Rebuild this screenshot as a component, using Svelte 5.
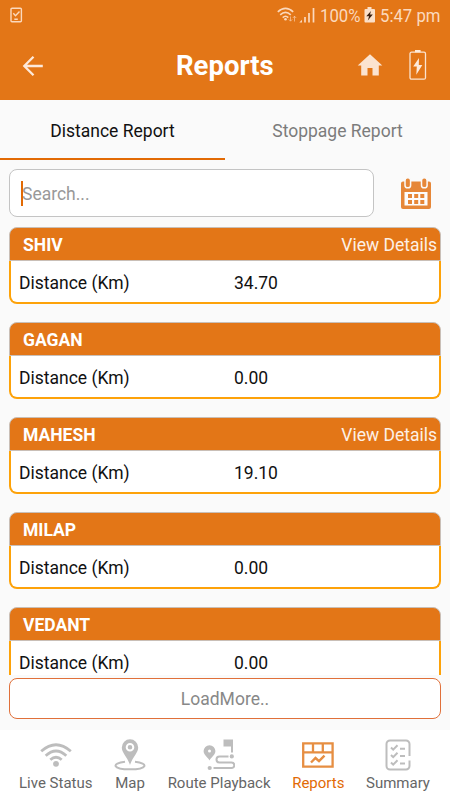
<script lang="ts">
    let tab = $state('distance');
    let search = $state('');

    const vehicles = [
        { name: 'SHIV', distance: '34.70', details: true },
        { name: 'GAGAN', distance: '0.00', details: false },
        { name: 'MAHESH', distance: '19.10', details: true },
        { name: 'MILAP', distance: '0.00', details: false },
        { name: 'VEDANT', distance: '0.00', details: false },
    ];

    let shown = $derived(vehicles.filter((v) => v.name.includes(search.toUpperCase())));
</script>

<div class="app">
    <header>
        <div class="status">
            <svg class="task" width="14" height="18" viewBox="0 0 14 18" fill="none" stroke="#fbd9bd" stroke-width="1.4">
                <rect x="1" y="1.2" width="10.4" height="13.6" rx="1"/>
                <path d="M3.3 6.3l2.2 2.4 4-4.2M4.3 12.3h3.5"/>
            </svg>
            <svg class="signal" width="40" height="18" viewBox="0 0 40 18" fill="none" stroke="#fbd9bd" stroke-width="1.6">
                <path d="M.8 4.8Q8.5-2.2 16.2 4.8M3.2 7.8Q8.5 2.8 13.8 7.8M5.7 10.6Q8.5 7.9 11.3 10.6"/>
                <circle cx="8.5" cy="12.2" r="1.3" fill="#fbd9bd" stroke="none"/>
                <path d="M13.5 9.5v4.5M11.8 12.4l1.7 1.8 1.7-1.8M17.5 14.5V9.2M15.8 11l1.7-1.8 1.7 1.8" stroke-width="1" opacity=".6"/>
                <path d="M22.3 15.5L25 12.8v2.700z" fill="#fbd9bd" stroke="none"/>
                <path d="M28 15.500V10M32 15.500V6M36.500 15.500V1" stroke-width="1.700"/>
            </svg>
            <span class="pct"><span>100%</span></span>
            <svg class="charge" width="12" height="17" viewBox="0 0 12 17">
                <path d="M3.5 0h4v2H10a1 1 0 0 1 1 1v11.500a1 1 0 0 1-1 1H1.500a1 1 0 0 1-1-1V3a1 1 0 0 1 1-1h2z" fill="#fbe0c9"/>
                <path d="M7 4L2.300 9.200h2.800l-1.300 4.300 5-5.900H6z" fill="#3a2010"/>
            </svg>
            <span class="time"><span>5:47 pm</span></span>
        </div>
        <div class="title">
            <svg class="back" width="22" height="22" viewBox="0 0 22 22" fill="none" stroke="#fde9da" stroke-width="2.3">
                <path d="M20.8 11H2.3M11.500 1.800L2.300 11l9.200 9.200"/>
            </svg>
            <h1>Reports</h1>
            <svg class="home" width="26" height="23" viewBox="0 0 26 23">
                <path d="M13 .2L25.300 11.500h-3.500v10h-6.300v-7.500h-5v7.500H4.200v-10H.7z" fill="#fbe3d0"/>
            </svg>
            <svg class="battery" width="18" height="31" viewBox="0 0 18 31">
                <rect x="1" y="2.2" width="15.500" height="27" rx="1.500" fill="none" stroke="#fbe3d0" stroke-width="1.300"/>
                <path d="M6 0h5.600v2.300H6zM10 8L4.200 16.600h3.600l-.5 8.200 6-9.800H9.800z" fill="#fdeadb"/>
            </svg>
        </div>
    </header>

    <div class="tabs">
        <button class:active={tab === 'distance'} onclick={() => (tab = 'distance')}>Distance Report</button>
        <button class:active={tab === 'stoppage'} onclick={() => (tab = 'stoppage')}>Stoppage Report</button>
    </div>

    <div class="search">
        <div class="field">
            <input type="text" placeholder="Search..." bind:value={search}/>
        </div>
        <svg width="32" height="33" viewBox="0 0 32 33">
            <path d="M3 4.500h26a2 2 0 0 1 2 2V30a2 2 0 0 1-2 2H3a2 2 0 0 1-2-2V6.500a2 2 0 0 1 2-2z" fill="#e68738"/>
            <path d="M4.500 15h23V28.500h-23z" fill="#fcfcfc"/>
            <rect x="5" y=".8" width="5.600" height="10" rx="2.600" fill="#e68738" stroke="#fafafa" stroke-width="1.500"/>
            <rect x="21.500" y=".8" width="5.600" height="10" rx="2.600" fill="#e68738" stroke="#fafafa" stroke-width="1.500"/>
            <path d="M8 17h4v4H8zM14.200 17h4v4h-4zM20.300 17h4v4h-4zM8 23h4v4H8zM14.200 23h4v4h-4zM20.300 23h4v4h-4z" fill="#e68738"/>
        </svg>
    </div>

    <div class="list">
        {#each shown as v}
            <div class="card">
                <div class="head">
                    <b>{v.name}</b>
                    {#if v.details}<span>View Details</span>{/if}
                </div>
                <div class="row">
                    <span>Distance (Km)</span>
                    <span>{v.distance}</span>
                </div>
            </div>
        {/each}
    </div>

    <button class="more">LoadMore..</button>

    <nav>
        <a href="#live">
            <svg width="32" height="32" viewBox="0 0 32 32" fill="none" stroke="#bdbdbd" stroke-width="2.800">
                <path d="M1.200 12.300Q16-.8 30.800 12.300M5.700 16.700Q16 7.300 26.300 16.700M10.300 20.800Q16 15.800 21.700 20.800"/>
                <circle cx="16" cy="24.800" r="2.900" fill="#bdbdbd" stroke="none"/>
            </svg>
            <span>Live Status</span>
        </a>
        <a href="#map">
            <svg width="32" height="32" viewBox="0 0 32 32">
                <path d="M11 22.800C-3 24.500-1.500 30.300 16 30.300S35 24.500 21 22.800" fill="none" stroke="#bdbdbd" stroke-width="2"/>
                <path d="M16 .3a8.200 8.200 0 0 0-8.200 8.200C7.800 14 13.500 18 16 26c2.500-8 8.200-12 8.200-17.500A8.200 8.200 0 0 0 16 .3z" fill="#bdbdbd"/>
                <circle cx="16" cy="8.300" r="3.300" fill="#bdbdbd" stroke="#fff" stroke-width="2"/>
            </svg>
            <span>Map</span>
        </a>
        <a href="#route">
            <svg width="32" height="32" viewBox="0 0 32 32">
                <path d="M6.500 6.200A5.900 5.900 0 0 0 .6 12.100C.6 16 5 18.500 6.500 21.500 8 18.500 12.400 16 12.400 12.100A5.900 5.900 0 0 0 6.500 6.200z" fill="#bdbdbd"/>
                <circle cx="6.500" cy="12" r="1.500" fill="#fff"/>
                <path d="M20.500.5H30V13.500h-2V7.500h-7.500z" fill="#bdbdbd"/>
                <circle cx="28.800" cy="17.400" r="2.100" fill="#bdbdbd"/>
                <circle cx="6.700" cy="29" r="2.100" fill="#bdbdbd"/>
                <path d="M25.500 17.500H16.500a3 3 0 0 0 0 6H28.500a2.700 2.700 0 0 1 0 5.500H10.500" fill="none" stroke="#bdbdbd" stroke-width="2"/>
            </svg>
            <span>Route Playback</span>
        </a>
        <a href="#reports" class="current">
            <svg width="32" height="32" viewBox="0 0 32 32" fill="none" stroke="#e68e42" stroke-width="2.300">
                <path d="M1.200 4.300H30.600V27.700H1.200zM1.200 13.300H30.600M11 4v9.300M20.800 4v9.300"/>
                <path d="M9 23.500l4.500-4.500 3.500 3.200 5.500-5.500" stroke-width="2.400"/>
            </svg>
            <span>Reports</span>
        </a>
        <a href="#summary">
            <svg width="32" height="32" viewBox="0 0 32 32" fill="none" stroke="#bdbdbd" stroke-width="2">
                <path d="M27.500 17V5a3.500 3.500 0 0 0-3.500-3.500H8A3.500 3.500 0 0 0 4.500 5v22A3.500 3.500 0 0 0 8 30.500h16a3.500 3.500 0 0 0 3.500-3.500v-5.500"/>
                <path d="M9 8.500l2.200 2.200 4.300-4.400M9 16l2.200 2.200 4.300-4.400M9 23.500l2.200 2.200 4.300-4.400M18 9.700h5M18 17h5M18 24.500h5"/>
            </svg>
            <span>Summary</span>
        </a>
    </nav>
</div>

<style>
    :global(body) {
        margin: 0;
    }
    .app {
        width: 450px;
        height: 800px;
        display: flex;
        flex-direction: column;
        background-color: #fafafa;
        font-family: Roboto, sans-serif;
        font-size: 17.5px;
        color: #111;
        overflow: hidden;
    }
    button,
    input {
        font: inherit;
        border: none;
        outline: none;
        padding: 0;
        background: none;
    }
    svg {
        display: block;
        flex: none;
    }
    header {
        height: 100px;
        flex: none;
        background-color: #e37617;
    }
    .status {
        height: 31px;
        display: flex;
        align-items: center;
        box-sizing: border-box;
        padding: 0 10px 0 10px;
        color: #fbd9bd;
        font-size: 19px;
    }
    .signal {
        margin-left: auto;
    }
    .pct,
    .time {
        display: block;
        white-space: nowrap;
    }
    .pct {
        width: 40px;
        margin: 0 4px 0 3px;
    }
    .time {
        width: 60px;
        margin-left: 4px;
    }
    .pct span,
    .time span {
        display: inline-block;
        transform: scaleX(.88);
        transform-origin: left;
    }
    .title {
        height: 69px;
        display: flex;
        align-items: center;
        padding: 0 23px 0 22px;
    }
    h1 {
        margin: 0 0 0 132px;
        font-size: 27.5px;
        font-weight: 700;
        line-height: 32px;
        color: #fff;
    }
    .home {
        margin-left: auto;
        margin-right: 26px;
    }
    .tabs {
        height: 60px;
        flex: none;
        display: flex;
    }
    .tabs button {
        flex: 1;
        box-sizing: border-box;
        padding-top: 3px;
        border-bottom: 2px solid transparent;
        color: #7c7c7c;
    }
    .tabs .active {
        color: #111;
        border-color: #e26a04;
    }
    .search {
        display: flex;
        align-items: center;
        justify-content: space-between;
        padding: 9px 18px 0 9px;
    }
    .field {
        width: 365px;
        height: 48px;
        box-sizing: border-box;
        border: 1px solid #c4c4c4;
        border-radius: 8px;
        background-color: #fff;
        display: flex;
        align-items: center;
        padding-left: 11px;
    }
    .field input {
        height: 24px;
        width: 330px;
        padding-top: 1px;
        border-left: 2px solid #e26a04;
        text-indent: -1px;
    }
    .field input::placeholder {
        color: #999;
        opacity: 1;
    }
    .list {
        height: 448px;
        margin-top: 10px;
        padding: 0 9px;
        flex: none;
        overflow: hidden;
    }
    .card {
        height: 77px;
        margin-bottom: 18px;
        display: flex;
        flex-direction: column;
    }
    .head {
        height: 34px;
        flex: none;
        box-sizing: border-box;
        display: flex;
        align-items: center;
        justify-content: space-between;
        padding: 1px 3px 0 13px;
        border: 1px solid #c9bfb7;
        border-radius: 8px 8px 0 0;
        background-color: #e37617;
        color: #fff;
    }
    .head span {
        color: #fdf0e6;
    }
    .row {
        flex: 1;
        display: flex;
        align-items: center;
        padding: 2px 8px 0;
        border: 2px solid #fda209;
        border-top: none;
        border-radius: 0 0 8px 8px;
        background-color: #fff;
    }
    .row span {
        width: 215px;
        flex: none;
    }
    .more {
        height: 41px;
        margin: 3px 9px 0;
        flex: none;
        border: 1px solid #e0703a;
        border-radius: 8px;
        background-color: #fff;
        color: #888;
    }
    nav {
        height: 70px;
        margin-top: auto;
        flex: none;
        box-sizing: border-box;
        padding: 9px 20px 0 19px;
        display: flex;
        justify-content: space-between;
        background-color: #fff;
    }
    nav a {
        display: flex;
        flex-direction: column;
        align-items: center;
        color: #666;
        font-size: 15px;
        line-height: 20px;
        text-decoration: none;
    }
    nav span {
        margin-top: 2px;
    }
    nav .current {
        color: #e26a04;
    }
</style>
